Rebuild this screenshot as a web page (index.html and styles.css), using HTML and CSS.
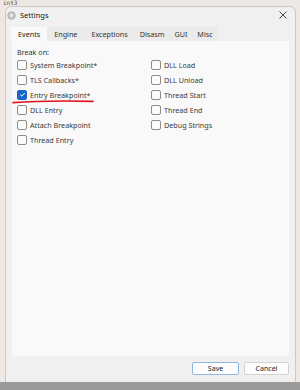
FILE: index.html
```html
<!DOCTYPE html>
<html lang="en">
<head>
    <meta charset="UTF-8">
    <title>Settings</title>
    <link rel="stylesheet" href="styles.css">
</head>
<body>
    <div class="console">int3</div>

    <div class="window">
        <div class="titlebar">
            <svg class="app-icon" width="9" height="9" viewBox="0 0 10 10">
                <circle cx="5" cy="5" r="4.2" fill="#c9c9c9" stroke="#9a9a9a" stroke-width="0.8"/>
                <circle cx="5" cy="5" r="1.6" fill="#eeeeee"/>
            </svg>
            <span class="title">Settings</span>
            <svg class="close" width="8" height="8" viewBox="0 0 8 8">
                <path d="M0.5 0.5 L7.5 7.5 M7.5 0.5 L0.5 7.5" stroke="#333" stroke-width="0.9"/>
            </svg>
        </div>

        <div class="tabs">
            <div class="tab active">Events</div>
            <div class="tab">Engine</div>
            <div class="tab">Exceptions</div>
            <div class="tab">Disasm</div>
            <div class="tab">GUI</div>
            <div class="tab">Misc</div>
        </div>

        <div class="panel">
            <div class="label">Break on:</div>
            <div class="columns">
                <div class="col">
                    <div class="row"><span class="box"></span>System Breakpoint*</div>
                    <div class="row"><span class="box"></span>TLS Callbacks*</div>
                    <div class="row marked">
                        <span class="box checked">
                            <svg width="9" height="9" viewBox="0 0 9 9"><path d="M2.2 4.6 L3.8 6.1 L6.9 2.9" fill="none" stroke="#fff" stroke-width="1"/></svg>
                        </span>Entry Breakpoint*
                        <svg class="scribble" width="82" height="5" viewBox="0 0 82 5">
                            <path d="M1 3.6 C20 2.2 50 1.6 81 2.4" fill="none" stroke="#e0141c" stroke-width="1.6" stroke-linecap="round"/>
                        </svg>
                    </div>
                    <div class="row"><span class="box"></span>DLL Entry</div>
                    <div class="row"><span class="box"></span>Attach Breakpoint</div>
                    <div class="row"><span class="box"></span>Thread Entry</div>
                </div>
                <div class="col">
                    <div class="row"><span class="box"></span>DLL Load</div>
                    <div class="row"><span class="box"></span>DLL Unload</div>
                    <div class="row"><span class="box"></span>Thread Start</div>
                    <div class="row"><span class="box"></span>Thread End</div>
                    <div class="row"><span class="box"></span>Debug Strings</div>
                </div>
            </div>
        </div>

        <div class="buttons">
            <button class="btn default">Save</button>
            <button class="btn">Cancel</button>
        </div>
    </div>

    <div class="taskbar"></div>
</body>
</html>
```

FILE: styles.css
```css
body {
    margin: 0;
    width: 300px;
    height: 390px;
    overflow: hidden;
    background-color: #ede8e3;
    font-family: "Noto Sans", "Open Sans", sans-serif;
    font-size: 7.2px;
    color: #222;
    display: flex;
    flex-direction: column;
}

.console {
    height: 6px;
    font-family: "DejaVu Sans Mono", monospace;
    font-size: 6px;
    line-height: 6px;
    color: #555;
    padding-left: 3px;
}

.window {
    margin-left: 5px;
    width: 289px;
    height: 376px;
    background-color: #f0f0f0;
    border: 1px solid #c9c9c9;
    border-bottom: none;
    border-radius: 6px 6px 0 0;
    display: flex;
    flex-direction: column;
}

.titlebar {
    height: 16px;
    display: flex;
    align-items: center;
    padding: 0 5px 0 1px;
}

.app-icon {
    margin-right: 4px;
}

.title {
    font-size: 7.5px;
    color: #1a1a1a;
    flex: 1;
}

.close {
    margin-right: 3px;
}

.tabs {
    display: flex;
    padding-left: 5px;
    margin-top: 4px;
    height: 14px;
}

.tab {
    height: 14px;
    line-height: 14px;
    padding: 0 5px;
    background-color: #ebebeb;
    color: #333;
}

.tab.active {
    background-color: #f9f9f9;
    color: #222;
    padding: 0 7px;
}

.tab:nth-child(2) { padding: 0 7px; }
.tab:nth-child(3) { padding: 0 7px; }

.panel {
    margin: 0 6px 0 6px;
    height: 315px;
    background-color: #f9f9f9;
    padding: 6px 0 0 5px;
    box-sizing: border-box;
}

.label {
    height: 10px;
    line-height: 10px;
    color: #333;
}

.columns {
    display: flex;
}

.col {
    width: 134px;
}

.row {
    position: relative;
    height: 15px;
    display: flex;
    align-items: center;
    color: #3a3a3a;
}

.box {
    width: 8px;
    height: 8px;
    border: 1px solid #8d8d8d;
    border-radius: 2px;
    background-color: #fbfbfb;
    margin-right: 3px;
    flex-shrink: 0;
    display: flex;
}

.box.checked {
    background-color: #1766c9;
    border-color: #1766c9;
}

.box.checked svg {
    margin: -0.5px;
}

.scribble {
    position: absolute;
    left: -5px;
    top: 12px;
}

.buttons {
    display: flex;
    justify-content: flex-end;
    gap: 5px;
    padding: 6px 6px 0 0;
}

.btn {
    height: 13px;
    padding: 0;
    font-family: "Noto Sans", "Open Sans", sans-serif;
    font-size: 7px;
    color: #222;
    background-color: #fdfdfd;
    border: 1px solid #d3d3d3;
    border-radius: 2px;
    width: 45px;
}

.btn.default {
    width: 47px;
    border-color: #8fb6e3;
}

.taskbar {
    height: 8px;
    background-color: #9b9b9b;
}
```
